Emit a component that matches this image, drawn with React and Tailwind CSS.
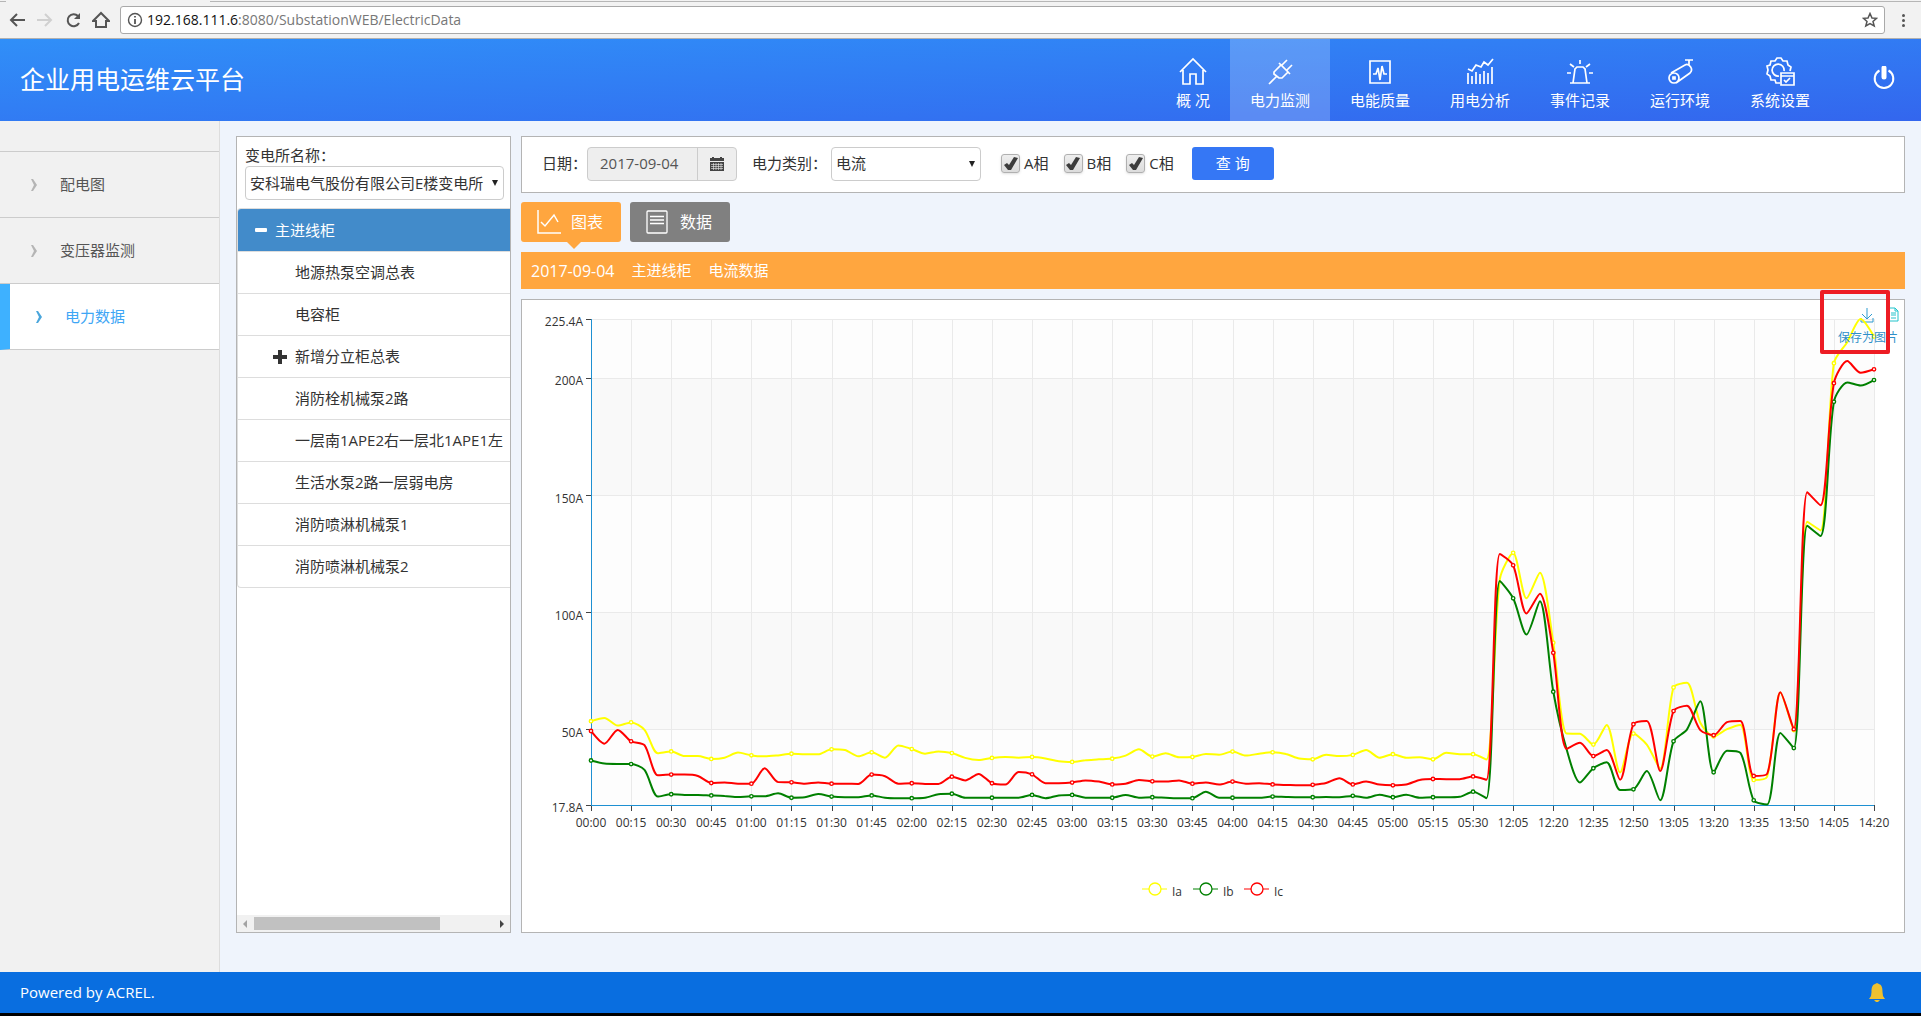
import React from "react";

const times = [
  "00:00", "00:15", "00:30", "00:45", "01:00", "01:15", "01:30", "01:45", "02:00", "02:15", "02:30",
  "02:45", "03:00", "03:15", "03:30", "03:45", "04:00", "04:15", "04:30", "04:45", "05:00", "05:15",
  "05:30", "12:05", "12:20", "12:35", "12:50", "13:05", "13:20", "13:35", "13:50", "14:05", "14:20",
];

const series = [
  {
    name: "Ia",
    color: "#ffff00",
    values: [
      53.6, 55, 51.7, 53.1, 49.9, 39.9, 40.7, 38.7, 38.7, 37.5, 38, 40.2, 39, 38.6, 39, 39.7, 39.5, 39.5, 41.6, 41.3,
      38.6, 40.3, 38, 43.2, 41.7, 39.7, 40.7, 40, 37.9, 37, 37.9, 38.3, 38, 38.3, 37.7, 36.5, 36.2, 36.9, 37.3, 37.6,
      38.9, 41.6, 38.5, 39.9, 38.2, 38.3, 39.6, 39.3, 40.6, 38.9, 39.7, 40.3, 39.6, 37.6, 37.3, 39.3, 38.7, 39.2,
      41.3, 38, 39.5, 38, 38.2, 37.3, 40.1, 39.5, 39.5, 37.2, 114.2, 125.5, 106.1, 117, 87.1, 48.3, 48.2, 43.6, 52,
      31.7, 48.3, 43.6, 33.4, 68, 70, 52.9, 47.1, 50.2, 52, 28.5, 29.9, 65.9, 49.8, 138.8, 135.1, 206.5, 215.6,
      225.4, 217.9,
    ],
  },
  {
    name: "Ib",
    color: "#008000",
    values: [
      36.8, 35.5, 35.3, 35.3, 32.8, 21.4, 22.4, 22.1, 22.1, 21.9, 21.7, 21.2, 21.5, 21.5, 22.8, 20.9, 21.1, 22.5,
      21.4, 21.1, 21.1, 21.9, 20.9, 20.7, 20.7, 20.9, 22.4, 22.6, 20.9, 20.9, 20.9, 20.9, 20.9, 22.1, 20.7, 21.9,
      22.1, 20.9, 20.9, 20.9, 22.1, 20.9, 21.1, 20.9, 20.7, 20.7, 23.5, 20.9, 20.9, 20.9, 20.9, 21.4, 21.2, 21.1,
      21.1, 21.2, 21.1, 21.7, 20.9, 22.2, 21.1, 22.2, 20.9, 21.1, 21.1, 21.3, 23.5, 20.7, 113.5, 106.1, 90.6, 104.8,
      66.2, 41.6, 27.4, 33.5, 36.1, 24.2, 24.5, 32.3, 19.8, 45, 50, 62.1, 31.8, 41, 40.1, 19.8, 18, 48.6, 42.1,
      137.1, 132.7, 190, 198.3, 197, 199.3,
    ],
  },
  {
    name: "Ic",
    color: "#ff0000",
    values: [
      49.4, 44, 49.9, 45, 43.4, 30.5, 30.8, 30.8, 30.2, 27.2, 27.4, 26.9, 26.9, 33.5, 27.6, 27.5, 26.9, 27.4, 26.9,
      26.9, 26.8, 30.8, 30.1, 26.9, 27.1, 26.8, 26.8, 29.9, 28.3, 31.1, 27.1, 26.5, 31.9, 30.9, 27.1, 27.1, 27.4,
      28.3, 27.8, 26.6, 26.9, 28.5, 27.9, 27.8, 28.3, 26.9, 27.4, 26.5, 27.8, 26.9, 27.1, 26.6, 26.4, 26.2, 26.4,
      27.2, 29.2, 26.6, 27.8, 26.5, 26.2, 26.5, 28.5, 28.9, 28.8, 28.8, 30, 28.6, 125, 120.2, 99.6, 108, 82.8, 41.8,
      44.4, 38.7, 41.3, 28.6, 52.3, 53.7, 32.3, 57.9, 60.2, 49.8, 47.6, 53.2, 53.7, 30.2, 31.1, 66, 50.2, 151.4,
      145.8, 198, 207.4, 202.4, 203.9,
    ],
  },
];

const X0 = 69;
const X1 = 1352;
const Y0 = 505;
const Y1 = 19;
const MIN = 17.8;
const MAX = 225.4;
const px = (i) => X0 + ((X1 - X0) * i) / 96;
const py = (v) => Y0 - ((Y0 - Y1) * (v - MIN)) / (MAX - MIN);
const clamp = (v, a, b) => Math.min(Math.max(v, Math.min(a, b)), Math.max(a, b));

/* Smooth curve whose control points never leave the span of their segment. */
function curve(values) {
  const p = values.map((v, i) => [px(i), py(v)]);
  const slope = p.map((q, i) => {
    if (i === 0 || i === p.length - 1) return 0;
    const a = p[i - 1];
    const b = p[i + 1];
    const d0 = Math.hypot(q[0] - a[0], q[1] - a[1]);
    const d1 = Math.hypot(q[0] - b[0], q[1] - b[1]);
    const vx = (b[0] - a[0]) * 0.27;
    const vy = (b[1] - a[1]) * 0.27;
    const k0 = d0 / (d0 + d1);
    const k1 = d1 / (d0 + d1);
    let inY = clamp(q[1] - vy * k0, a[1], q[1]);
    let outY = q[1] + ((q[1] - inY) * k1) / k0;
    outY = clamp(outY, q[1], b[1]);
    inY = q[1] - ((outY - q[1]) * k0) / k1;
    return { i: [q[0] - vx * k0, inY], o: [q[0] + vx * k1, outY] };
  });
  let d = `M${p[0][0]},${p[0][1]}`;
  for (let i = 1; i < p.length; i++) {
    const c0 = slope[i - 1] ? slope[i - 1].o : p[i - 1];
    const c1 = slope[i] ? slope[i].i : p[i];
    d += `C${c0[0].toFixed(1)},${c0[1].toFixed(1)} ${c1[0].toFixed(1)},${c1[1].toFixed(1)} ${p[i][0].toFixed(1)},${p[i][1].toFixed(1)}`;
  }
  return d;
}

const yTicks = [225.4, 200, 150, 100, 50, 17.8];

function Chart() {
  return (
    <svg viewBox="0 0 1382 632" className="block h-auto w-full text-xs" role="img" aria-label="电流数据">
      {yTicks.slice(0, -1).map((t, i) => (
        <rect key={t} x={X0} width={X1 - X0} y={py(t)} height={py(yTicks[i + 1]) - py(t)} fill={i % 2 ? "#f9f9f9" : "#fdfdfd"} />
      ))}
      <g stroke="#eaeaea" shapeRendering="crispEdges">
        {yTicks.slice(0, -1).map((t) => (
          <line key={t} x1={X0} x2={X1} y1={Math.floor(py(t))} y2={Math.floor(py(t))} />
        ))}
        {times.map((t, i) => (
          <line key={t} x1={Math.round(px(i * 3))} x2={Math.round(px(i * 3))} y1={Y1} y2={Y0} />
        ))}
      </g>
      <g stroke="#444" shapeRendering="crispEdges">
        {yTicks.map((t) => (
          <line key={t} x1={X0 - 5} x2={X0} y1={Math.floor(py(t))} y2={Math.floor(py(t))} />
        ))}
        {times.map((t, i) => (
          <line key={t} x1={Math.round(px(i * 3))} x2={Math.round(px(i * 3))} y1={Y0} y2={Y0 + 6} />
        ))}
      </g>
      <path d={`M${X0},${Y1}V${Y0}H${X1}`} fill="none" stroke="#1e90d2" shapeRendering="crispEdges" />
      <g fill="#333" textAnchor="end">
        {yTicks.map((t) => (
          <text key={t} x={X0 - 8} y={Math.round(py(t)) + 7}>{t}A</text>
        ))}
      </g>
      <g fill="#333" textAnchor="middle">
        {times.map((t, i) => (
          <text key={t} x={px(i * 3)} y={Y0 + 22}>{t}</text>
        ))}
      </g>
      <g stroke="#2f9bd0" fill="none">
        <path d="M1345,8V19M1340,14l5,5 5,-5M1339,18v4h12v-4" />
        <path stroke="#22c4cc" d="M1367,8h6l3,3v10h-9zM1373,8v3h3M1369,13h5M1369,15h5M1369,18h5" />
      </g>
      {series.map((s) => (
        <g key={s.name} stroke={s.color}>
          <path d={curve(s.values)} fill="none" strokeWidth="2" strokeLinejoin="round" />
          {s.values.map((v, i) =>
            i % 3 === 0 ? <circle key={i} cx={px(i)} cy={py(v)} r="1.7" fill="#fff" strokeWidth="1.4" /> : null
          )}
        </g>
      ))}
      <text x="1346" y="42" textAnchor="middle" fill="#2f8fc8">保存为图片</text>
      {series.map((s, i) => (
        <g key={s.name} stroke={s.color}>
          <line x1={620 + i * 51} x2={645 + i * 51} y1="589" y2="589" />
          <circle cx={633 + i * 51} cy="589" r="6" fill="#fff" strokeWidth="1.3" />
          <text x={650 + i * 51} y="596" fill="#333" stroke="none">{s.name}</text>
        </g>
      ))}
    </svg>
  );
}

const navItems = [
  { label: "概 况", d: "M1,14 14,1 27,14M4,12V26H11V16H17V26H24V12" },
  { label: "电力监测", active: true, d: "M3,26 11,18M8,14 15,7 22,14 16,20H13L8,16ZM13,5 24,16M16,7 21,2M21,12 26,7" },
  { label: "电能质量", d: "M4,3H24V25H4ZM7,16H10L12,10 14,22 16,8 18,16H21" },
  { label: "用电分析", d: "M2,11 6,13 10,7 15,9 18,4 22,7 27,1M2,15V26M6,18V26M10,14V26M14,16V26M18,13V26M22,15V26M26,9V26" },
  { label: "事件记录", d: "M4,25H24M7,25 9,11 11,9H17L19,11 21,25M14,2V6M4,6 8,9M24,6 20,9M1,15H5M23,15H27" },
  { label: "运行环境", d: "M5,15 19,7C23,5 28,11 24,15L10,25M19,2H27M23,2V7M8,15A5,5 0 1 0 8,25A5,5 0 1 0 8,15M7,19h2v2h-2z" },
  { label: "系统设置", d: "M14,25 10,25 9,22 5,22 4,18 1,16 2,12 1,8 4,7 5,3 9,3 11,0H15L17,3 21,3 22,7 25,9 24,13M13,18A6,6 0 1 1 18,13M15,15V27H28V15ZM15,18H28M18,22 20,24 24,20" },
];

function NavIcon({ d }) {
  return (
    <svg viewBox="0 0 28 28" className="size-7 overflow-visible" fill="none" stroke="#fff" strokeWidth="1.7">
      <path d={d} />
    </svg>
  );
}

function Browser() {
  return (
    <div className="flex h-[39px] flex-col border-b border-[#b0b0b0] bg-[#f2f2f2]">
      <div className="flex h-[2px] shrink-0 items-end">
        <div className="h-px w-1.5 bg-[#b6b6b6]" />
        <div className="h-px w-[204px]" />
        <div className="h-px flex-1 bg-[#b6b6b6]" />
      </div>
      <div className="flex flex-1 items-center pr-2.5 pl-2">
        <div className="flex w-28 items-center gap-2.5 text-[#555]">
          <button aria-label="后退">
            <svg viewBox="0 0 18 18" className="size-[18px]" fill="none" stroke="currentColor" strokeWidth="2"><path d="M17,9H3M9,3 3,9 9,15" /></svg>
          </button>
          <button aria-label="前进" className="text-[#d0d0d0]">
            <svg viewBox="0 0 18 18" className="size-[18px]" fill="none" stroke="currentColor" strokeWidth="2"><path d="M1,9H15M9,3 15,9 9,15" /></svg>
          </button>
          <button aria-label="刷新">
            <svg viewBox="0 0 18 18" className="size-[18px]" fill="none" stroke="currentColor" strokeWidth="2"><path d="M15,12A6,6 0 1 1 14,5" /><path d="M16,2V8H10Z" fill="currentColor" stroke="none" /></svg>
          </button>
          <button aria-label="主页">
            <svg viewBox="0 0 18 18" className="size-[18px]" fill="none" stroke="currentColor" strokeWidth="2"><path d="M1,10 9,2 17,10H14V16H4V10Z" /></svg>
          </button>
        </div>
        <div className="flex h-7 flex-1 items-center rounded-[3px] border border-[#a9a9a9] bg-white pr-1.5 pl-1.5">
          <svg viewBox="0 0 16 16" className="mr-1 size-4" fill="none" stroke="#555" strokeWidth="1.4"><circle cx="8" cy="8" r="6.5" /><path d="M8,7V12M8,4V5.5" strokeWidth="1.8" /></svg>
          <div className="flex-1 text-sm text-[#777]"><span className="text-[#111]">192.168.111.6</span>:8080/SubstationWEB/ElectricData</div>
          <svg viewBox="0 0 16 16" className="size-4" fill="none" stroke="#555" strokeWidth="1.5"><path d="M8,1.5 10,6 14.5,6.3 11,9.5 12.2,14 8,11.5 3.8,14 5,9.5 1.5,6.3 6,6Z" /></svg>
        </div>
        <button aria-label="菜单" className="ml-2.5 flex w-4 flex-col items-center gap-[2px]">
          <span className="size-[3px] rounded-full bg-[#555]" />
          <span className="size-[3px] rounded-full bg-[#555]" />
          <span className="size-[3px] rounded-full bg-[#555]" />
        </button>
      </div>
    </div>
  );
}

function Header() {
  return (
    <header className="flex h-[82px] items-stretch bg-linear-to-br from-[#308ff8] to-[#3366ee] pl-5 text-white">
      <h1 className="flex flex-1 items-center text-[25px]">企业用电运维云平台</h1>
      <nav className="flex text-[15px]">
        {navItems.map((n) => (
          <a key={n.label} href="#" className={n.active ? "flex flex-col items-center bg-white/20 px-5 pt-[19px]" : "flex flex-col items-center px-5 pt-[19px]"}>
            <NavIcon d={n.d} />
            <span className="mt-0.5 leading-6">{n.label}</span>
          </a>
        ))}
      </nav>
      <button aria-label="退出" className="mr-[25px] ml-[42px] flex items-center pb-1">
        <svg viewBox="0 0 24 24" className="size-6" fill="none" stroke="#fff" strokeWidth="2"><path d="M7.5,4.5A9.3,9.3 0 1 0 16.5,4.5" /><path d="M12,2V11" strokeWidth="5" strokeLinecap="round" /></svg>
      </button>
    </header>
  );
}

function Chevron({ color }) {
  return (
    <svg viewBox="0 0 8 14" className="h-3.5 w-2" fill={color}><path d="M1,1H3L7,7 3,13H1L4,7Z" /></svg>
  );
}

const menu = [{ label: "配电图" }, { label: "变压器监测" }, { label: "电力数据", active: true }];

function Sidebar() {
  return (
    <aside className="w-[220px] shrink-0 border-r border-[#ddd] bg-[#f1f1f1] pt-[30px] text-[15px]">
      <nav className="border-t border-[#ccc]">
        {menu.map((m) =>
          m.active ? (
            <a key={m.label} href="#" className="flex h-[66px] items-center gap-[22px] border-b border-l-10 border-b-[#ccc] border-l-[#3eb1ff] bg-white pl-[25px] text-[#3ea6f5]">
              <Chevron color="#4aa6dc" />
              {m.label}
            </a>
          ) : (
            <a key={m.label} href="#" className="flex h-[66px] items-center gap-[22px] border-b border-[#ccc] pl-[30px] text-[#555]">
              <Chevron color="#b5b5b5" />
              {m.label}
            </a>
          )
        )}
      </nav>
    </aside>
  );
}

function Arrow() {
  return (
    <svg viewBox="0 0 6 6" className="pointer-events-none absolute top-1/2 right-[6px] size-1.5 -translate-y-1/2" fill="#222"><path d="M0,0H6L3,6Z" /></svg>
  );
}

const tree = [
  { label: "地源热泵空调总表" },
  { label: "电容柜" },
  { label: "新增分立柜总表", plus: true },
  { label: "消防栓机械泵2路" },
  { label: "一层南1APE2右一层北1APE1左" },
  { label: "生活水泵2路一层弱电房" },
  { label: "消防喷淋机械泵1" },
  { label: "消防喷淋机械泵2" },
];

function TreePanel() {
  return (
    <section className="flex w-[275px] shrink-0 flex-col border border-[#b4b4b4] bg-white text-[15px] text-[#333]">
      <div className="pt-2 pr-1.5 pl-2">
        <label htmlFor="station" className="block leading-[21px]">变电所名称：</label>
        <div className="relative">
          <select id="station" className="h-[34px] w-full appearance-none rounded border border-[#ccc] bg-white pr-4 pl-1">
            <option>安科瑞电气股份有限公司E楼变电所</option>
          </select>
          <Arrow />
        </div>
      </div>
      <ul className="mt-2 overflow-hidden rounded-l border-t border-b border-l border-[#ddd]">
        <li className="flex h-[42px] items-center gap-2 bg-[#428bca] pl-[17px] text-white">
          <span className="h-1 w-3 rounded-[1px] bg-white" />
          主进线柜
        </li>
        {tree.map((t) => (
          <li key={t.label} className="flex h-[42px] items-center border-t border-[#ddd] pl-[35px] whitespace-nowrap">
            <span className="w-[22px] shrink-0">
              {t.plus && <svg viewBox="0 0 14 14" className="size-3.5" fill="#333"><path d="M5,0H9V5H14V9H9V14H5V9H0V5H5Z" /></svg>}
            </span>
            {t.label}
          </li>
        ))}
      </ul>
      <div className="mt-auto flex h-[17px] items-center justify-between bg-[#f1f1f1] px-1.5">
        <svg viewBox="0 0 4 8" className="h-2 w-1" fill="#a3a3a3"><path d="M4,0V8L0,4Z" /></svg>
        <div className="mx-[7px] flex-1"><div className="h-[13px] w-[78%] bg-[#c1c1c1]" /></div>
        <svg viewBox="0 0 4 8" className="h-2 w-1" fill="#444"><path d="M0,0V8L4,4Z" /></svg>
      </div>
    </section>
  );
}

function Phase({ name }) {
  return (
    <label className="flex items-center gap-1">
      <span className="relative size-[19px]">
        <input type="checkbox" defaultChecked className="block size-[19px] appearance-none rounded-[3px] border border-[#b0b0b0] bg-linear-to-b from-[#eee] to-[#dcdcdc] shadow-sm" />
        <svg viewBox="0 0 16 16" className="pointer-events-none absolute inset-0 m-auto size-4" fill="#3c3c3c"><path d="M1,9 4,7 6,9 11,1 15,2 8,14H5Z" /></svg>
      </span>
      {name}
    </label>
  );
}

function Filters() {
  return (
    <form className="flex h-[57px] items-center border border-[#b4b4b4] bg-white pb-0.5 pl-5 text-[15px] text-[#333]" onSubmit={(e) => e.preventDefault()}>
      <label htmlFor="date">日期：</label>
      <div className="flex h-[34px] rounded border border-[#ccc] bg-[#eee]">
        <input id="date" readOnly defaultValue="2017-09-04" className="w-[109px] pl-3 text-[#555]" />
        <button type="button" aria-label="选择日期" className="flex w-[39px] items-center justify-center border-l border-[#ccc]">
          <svg viewBox="0 0 14 14" className="size-3.5" fill="#444">
            <path d="M0,1H2V0H4V1H10V0H12V1H14V4H0ZM0,5H14V14H0Z" />
            <path d="M1,7.5H13M1,9.5H13M1,11.5H13M3.5,6V13M6,6V13M8.5,6V13M11,6V13" stroke="#eee" strokeWidth=".6" />
          </svg>
        </button>
      </div>
      <label htmlFor="kind" className="ml-[15px]">电力类别：</label>
      <div className="relative ml-1">
        <select id="kind" className="h-[34px] w-[150px] appearance-none rounded border border-[#ccc] bg-white pl-1">
          <option>电流</option>
        </select>
        <Arrow />
      </div>
      <div className="ml-5 flex gap-[15px]">
        <Phase name="A相" />
        <Phase name="B相" />
        <Phase name="C相" />
      </div>
      <button type="submit" className="ml-[18px] h-[33px] w-[82px] rounded-[3px] bg-[#3577f5] text-white">查 询</button>
    </form>
  );
}

export default function App() {
  return (
    <div className="flex min-h-screen flex-col bg-[#eff4fc] font-['Open_Sans','Noto_Sans_CJK_SC',sans-serif]">
      <Browser />
      <Header />
      <div className="flex flex-1">
        <Sidebar />
        <main className="flex min-w-0 flex-1 gap-2.5 px-4 pt-[15px] pb-[39px]">
          <TreePanel />
          <div className="min-w-0 flex-1">
            <Filters />
            <div className="mt-[9px] flex gap-[9px] text-base text-white">
              <button className="relative flex h-10 w-[100px] items-center gap-2.5 rounded-[3px] bg-[#ffa63f] pl-4">
                <svg viewBox="0 0 24 24" className="size-6" fill="none" stroke="#fff" strokeWidth="1.5"><path d="M1,0V23H24M4,12 8,16 17,5 21,12" /></svg>
                图表
                <svg viewBox="0 0 14 7" className="absolute top-full left-[46px] h-[7px] w-3.5" fill="#ffa63f"><path d="M0,0H14L7,7Z" /></svg>
              </button>
              <button className="flex h-10 w-[100px] items-center gap-2.5 rounded-[3px] bg-[#808080] pl-4">
                <svg viewBox="0 0 24 24" className="size-6" fill="none" stroke="#fff" strokeWidth="1.3"><rect x="1" y="1" width="20" height="22" rx="1" /><path d="M4,6.500H18M4,10H18M4,13.500H18" /></svg>
                数据
              </button>
            </div>
            <div className="mt-2.5 flex h-[37px] items-center gap-[17px] bg-[#ffa63f] pl-2.5 text-[15px] text-white">
              <span className="text-base">2017-09-04</span>
              <span>主进线柜</span>
              <span>电流数据</span>
            </div>
            <section className="relative mt-2.5 border border-[#b4b4b4] bg-white">
              <Chart />
              <div className="absolute -top-2.5 right-3.5 h-16 w-[70px] rounded-[2px] border-4 border-[#ed1c24]" />
            </section>
          </div>
        </main>
      </div>
      <footer className="flex h-[41px] items-center justify-between bg-[#096ee0] pr-9 pl-5 text-[15px] text-white">
        <span>Powered by ACREL.</span>
        <svg viewBox="0 0 16 20" className="h-5 w-4" fill="#edc02f"><path d="M8,0 10,1C13,2 13.5,5 13.5,9L14,13 16,16H0L2,13 2.5,9C2.5,5 3,2 6,1ZM5,17H11L9,19H7Z" /></svg>
      </footer>
      <div className="h-[3px] bg-black" />
    </div>
  );
}
